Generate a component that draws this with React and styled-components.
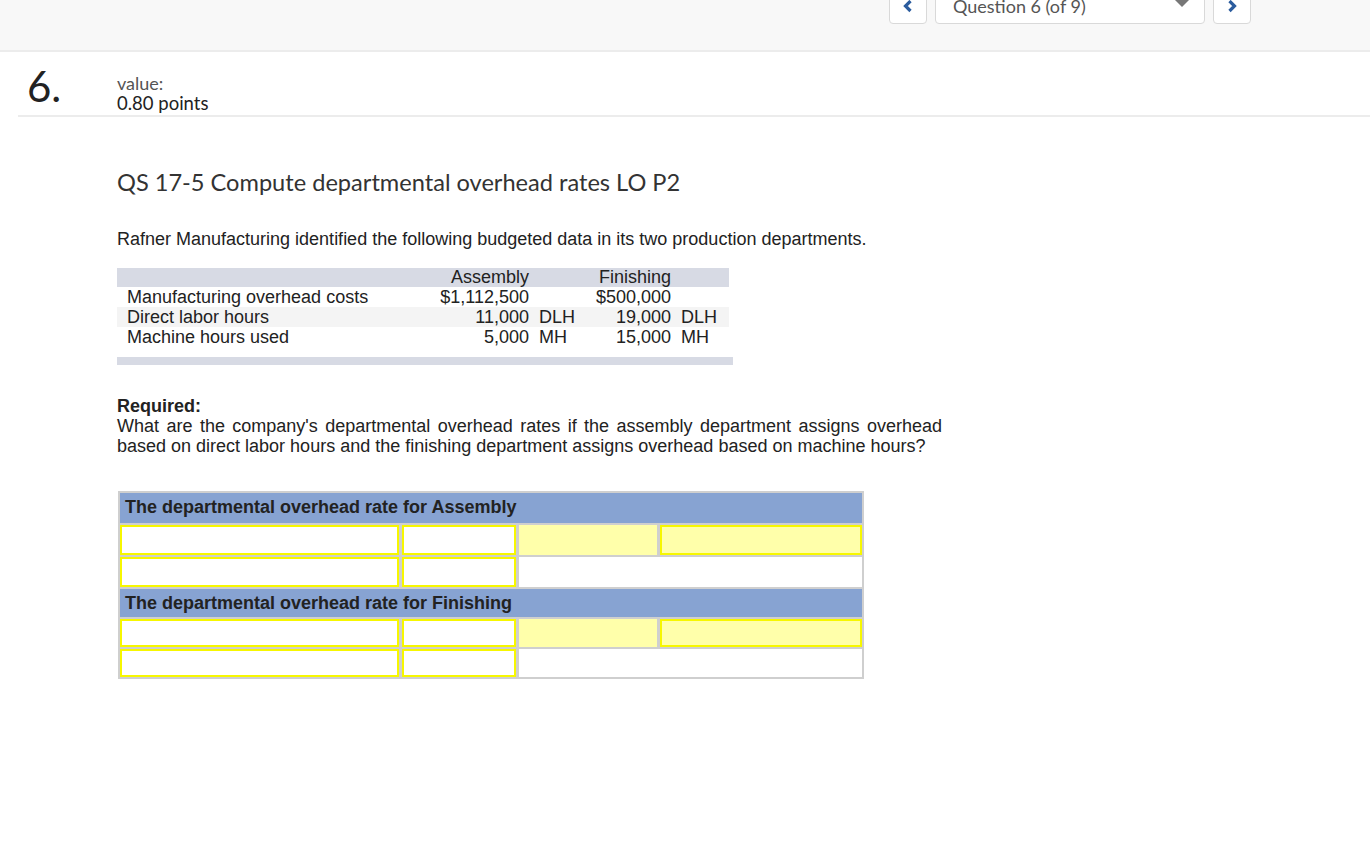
import React from 'react';
import styled, { createGlobalStyle } from 'styled-components';

const GlobalStyle = createGlobalStyle`
  body {
    margin: 0;
    background: #fff;
    font-family: "Liberation Sans", Arial, sans-serif;
    color: #222;
  }
`;

const TopBar = styled.div`
  height: 50px;
  background: #f8f8f8;
  border-bottom: 2px solid #ececec;
  display: flex;
  justify-content: flex-end;
  align-items: flex-end;
  padding-right: 119px;
  overflow: hidden;
`;

const Nav = styled.div`
  display: flex;
  align-items: flex-start;
  gap: 8px;
  margin-bottom: 26px;
`;

const NavButton = styled.button`
  width: 38px;
  height: 36px;
  margin-top: 2px;
  background: #fff;
  border: 1px solid #d9d9d9;
  border-radius: 4px;
  display: flex;
  align-items: flex-end;
  justify-content: center;
  padding: 0 0 10px;
  color: #2b5c9e;
`;

const Select = styled.div`
  width: 270px;
  height: 38px;
  background: #fff;
  border: 1px solid #d9d9d9;
  border-radius: 4px;
  box-sizing: border-box;
  display: flex;
  align-items: flex-end;
  justify-content: space-between;
  padding: 0 14px 6px 17px;
  font-family: Lato, "Open Sans", sans-serif;
  font-size: 18px;
  color: #555;
`;

const Caret = styled.span`
  width: 0;
  height: 0;
  border-left: 8px solid transparent;
  border-right: 8px solid transparent;
  border-top: 8px solid #777;
  margin-bottom: 10px;
`;

const QuestionHead = styled.div`
  margin: 13px 0 0 18px;
  display: flex;
  align-items: flex-start;
  border-bottom: 2px solid #ececec;
  padding-bottom: 2px;
`;

const Number = styled.div`
  width: 99px;
  padding-left: 9px;
  box-sizing: border-box;
  font-family: Lato, "Open Sans", sans-serif;
  font-size: 42px;
  line-height: 42px;
  color: #222;
`;

const Value = styled.div`
  font-family: Lato, "Open Sans", sans-serif;
  padding-top: 8px;
  line-height: 20px;
`;

const ValueLabel = styled.div`
  font-size: 18px;
  color: #555;
`;

const Points = styled.div`
  font-size: 18.5px;
  color: #222;
`;

const Content = styled.div`
  padding-left: 117px;
`;

const Title = styled.h1`
  margin: 50px 0 0;
  font-family: Lato, "Open Sans", sans-serif;
  font-weight: 400;
  font-size: 23.6px;
  line-height: 30px;
  color: #333;
`;

const Intro = styled.p`
  margin: 32px 0 0;
  font-size: 18px;
  line-height: 20px;
`;

const DataTable = styled.div`
  margin-top: 19px;
  width: 612px;
  font-size: 18px;
  line-height: 20px;
`;

const DataRow = styled.div`
  display: grid;
  grid-template-columns: 312px 100px 54px 88px 58px;
  background: ${p => (p.$head ? '#d7dae4' : p.$shade ? '#f4f4f4' : '#fff')};
  height: ${p => (p.$head ? '19px' : '20px')};
  line-height: ${p => (p.$head ? '19px' : '20px')};
`;

const Label = styled.span`
  padding-left: 10px;
`;

const Num = styled.span`
  text-align: right;
`;

const Unit = styled.span`
  padding-left: 10px;
  white-space: nowrap;
`;

const BottomBar = styled.div`
  margin-top: 10px;
  width: 616px;
  height: 8px;
  background: #d7dae4;
`;

const Required = styled.div`
  margin-top: 31px;
  width: 825px;
  font-size: 18px;
  line-height: 20px;
  text-align: justify;
`;

const Strong = styled.div`
  font-weight: 700;
`;

const AnswerGrid = styled.div`
  margin: 35px 0 0 1px;
  width: 746px;
  box-sizing: border-box;
  display: grid;
  grid-template-columns: 279px 114px 138px 1fr;
  gap: 2px 3px;
  padding: 2px;
  background: #cfcfcf;
`;

const Band = styled.div`
  grid-column: 1 / -1;
  height: ${p => p.$h}px;
  background: #87a3d2;
  font-weight: 700;
  font-size: 18px;
  color: #222;
  padding: 4px 0 0 5px;
  box-sizing: border-box;
`;

const Cell = styled.div`
  height: ${p => p.$h}px;
  box-sizing: border-box;
  background: ${p => (p.$yellow ? '#ffffaa' : '#fff')};
  border: ${p => (p.$edge ? '2px solid #f7f700' : 'none')};
  grid-column: ${p => (p.$wide ? '3 / -1' : 'auto')};
`;

const ChevronLeft = () => (
  <svg width="12" height="14" viewBox="0 0 12 14">
    <path d="M8.5 2 L3.5 7 L8.5 12" fill="none" stroke="currentColor" strokeWidth="3.2" />
  </svg>
);

const ChevronRight = () => (
  <svg width="12" height="14" viewBox="0 0 12 14">
    <path d="M3.5 2 L8.5 7 L3.5 12" fill="none" stroke="currentColor" strokeWidth="3.2" />
  </svg>
);

const rows = [
  ['Manufacturing overhead costs', '$1,112,500', '', '$500,000', ''],
  ['Direct labor hours', '11,000', 'DLH', '19,000', 'DLH'],
  ['Machine hours used', '5,000', 'MH', '15,000', 'MH'],
];

const AnswerBlock = ({ title, h }) => (
  <>
    <Band $h={h}>{title}</Band>
    <Cell $h={h} $edge />
    <Cell $h={h} $edge />
    <Cell $h={h} $yellow />
    <Cell $h={h} $yellow $edge />
    <Cell $h={h} $edge />
    <Cell $h={h} $edge />
    <Cell $h={h} $wide />
  </>
);

const App = () => (
  <>
    <GlobalStyle />
    <TopBar>
      <Nav>
        <NavButton><ChevronLeft /></NavButton>
        <Select>
          <span>Question 6 (of 9)</span>
          <Caret />
        </Select>
        <NavButton><ChevronRight /></NavButton>
      </Nav>
    </TopBar>
    <QuestionHead>
      <Number>6.</Number>
      <Value>
        <ValueLabel>value:</ValueLabel>
        <Points>0.80 points</Points>
      </Value>
    </QuestionHead>
    <Content>
      <Title>QS 17-5 Compute departmental overhead rates LO P2</Title>
      <Intro>Rafner Manufacturing identified the following budgeted data in its two production departments.</Intro>
      <DataTable>
        <DataRow $head>
          <span />
          <Num>Assembly</Num>
          <span />
          <Num>Finishing</Num>
          <span />
        </DataRow>
        {rows.map((r, i) => (
          <DataRow key={r[0]} $shade={i === 1}>
            <Label>{r[0]}</Label>
            <Num>{r[1]}</Num>
            <Unit>{r[2]}</Unit>
            <Num>{r[3]}</Num>
            <Unit>{r[4]}</Unit>
          </DataRow>
        ))}
      </DataTable>
      <BottomBar />
      <Required>
        <Strong>Required:</Strong>
        What are the company's departmental overhead rates if the assembly department assigns overhead
        based on direct labor hours and the finishing department assigns overhead based on machine hours?
      </Required>
      <AnswerGrid>
        <AnswerBlock title="The departmental overhead rate for Assembly" h={30} />
        <AnswerBlock title="The departmental overhead rate for Finishing" h={28} />
      </AnswerGrid>
    </Content>
  </>
);

export default App;
